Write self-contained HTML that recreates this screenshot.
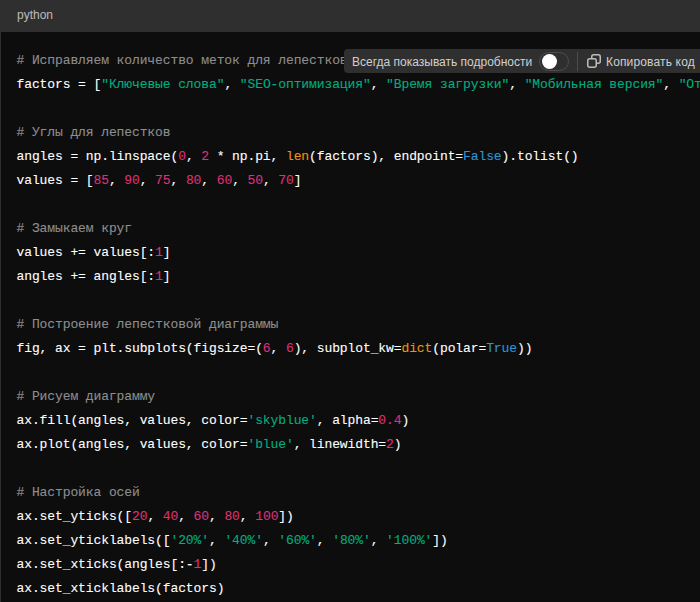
<!DOCTYPE html>
<html><head><meta charset="utf-8">
<style>
html,body{margin:0;padding:0;width:700px;height:602px;overflow:hidden;background:#0d0d0d;}
.hdr{position:absolute;left:0;top:0;width:700px;height:32px;background:#2f2f2f;}
.hdr span{position:absolute;left:17px;top:3px;font-family:"Liberation Sans",sans-serif;font-size:12px;line-height:24px;color:#bcbcbc;}
.lb{position:absolute;left:0;top:32px;width:1px;height:570px;background:#2f2f2f;}
pre{position:absolute;left:16.5px;top:49px;margin:0;font-family:"Liberation Mono",monospace;font-size:13px;line-height:24px;letter-spacing:-0.103px;color:#fff;-webkit-text-stroke:0.1px currentColor;white-space:pre;}
.c{color:#8e8e8e}
.s{color:#00ae80}
.n{color:#df3079}
.b{color:#e9950c}
.l{color:#2e95d3}
.bar{position:absolute;left:344px;top:49px;width:366px;height:24px;background:#2f2f2f;border-radius:4px;font-family:"Liberation Sans",sans-serif;font-size:12px;color:#d0d0d0;}
.bar .t1{position:absolute;left:8px;top:1px;line-height:24px;}
.tog{position:absolute;left:195px;top:3px;width:28px;height:17px;border:1px solid #4d4d4d;border-radius:10px;box-sizing:content-box;}
.knob{position:absolute;left:198px;top:5px;width:15px;height:15px;border-radius:50%;background:#fff;}
.sep{position:absolute;left:233px;top:3px;width:1px;height:19px;background:#4d4d4d;}
.ico{position:absolute;left:242px;top:4px;}
.bar .t2{position:absolute;left:262px;top:1px;line-height:24px;letter-spacing:0.15px;}
</style></head><body>
<div class="hdr"><span>python</span></div>
<div class="lb"></div><div style="position:absolute;left:1px;top:0;width:1px;height:1px;background:#262626"></div>
<pre><span class="c"># Исправляем количество меток для лепестков</span>
factors = [<span class="s">"Ключевые слова"</span>, <span class="s">"SEO-оптимизация"</span>, <span class="s">"Время загрузки"</span>, <span class="s">"Мобильная версия"</span>, <span class="s">"Отзывы"</span>]

<span class="c"># Углы для лепестков</span>
angles = np.linspace(<span class="n">0</span>, <span class="n">2</span> * np.pi, <span class="b">len</span>(factors), endpoint=<span class="l">False</span>).tolist()
values = [<span class="n">85</span>, <span class="n">90</span>, <span class="n">75</span>, <span class="n">80</span>, <span class="n">60</span>, <span class="n">50</span>, <span class="n">70</span>]

<span class="c"># Замыкаем круг</span>
values += values[:<span class="n">1</span>]
angles += angles[:<span class="n">1</span>]

<span class="c"># Построение лепестковой диаграммы</span>
fig, ax = plt.subplots(figsize=(<span class="n">6</span>, <span class="n">6</span>), subplot_kw=<span class="b">dict</span>(polar=<span class="l">True</span>))

<span class="c"># Рисуем диаграмму</span>
ax.fill(angles, values, color=<span class="s">'skyblue'</span>, alpha=<span class="n">0.4</span>)
ax.plot(angles, values, color=<span class="s">'blue'</span>, linewidth=<span class="n">2</span>)

<span class="c"># Настройка осей</span>
ax.set_yticks([<span class="n">20</span>, <span class="n">40</span>, <span class="n">60</span>, <span class="n">80</span>, <span class="n">100</span>])
ax.set_yticklabels([<span class="s">'20%'</span>, <span class="s">'40%'</span>, <span class="s">'60%'</span>, <span class="s">'80%'</span>, <span class="s">'100%'</span>])
ax.set_xticks(angles[:-<span class="n">1</span>])
ax.set_xticklabels(factors)
</pre>
<div class="bar">
<span class="t1">Всегда показывать подробности</span>
<div class="tog"></div><div class="knob"></div>
<div class="sep"></div>
<svg class="ico" width="16" height="16" viewBox="0 0 16 16" fill="none" stroke="#bdbdbd" stroke-width="1.5">
<rect x="5.75" y="1.75" width="8.5" height="8.5" rx="2"/>
<rect x="1.75" y="5.75" width="8.5" height="8.5" rx="2" fill="#2f2f2f"/>
</svg>
<span class="t2">Копировать код</span>
</div>
</body></html>
